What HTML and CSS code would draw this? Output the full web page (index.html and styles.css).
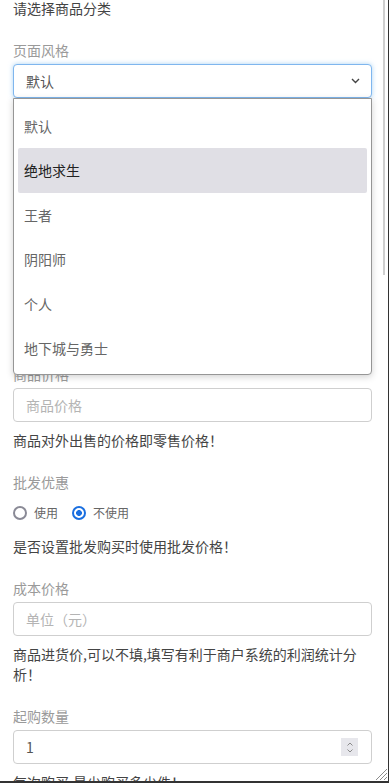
FILE: index.html
```html
<!DOCTYPE html>
<html lang="zh-CN">
<head>
<meta charset="utf-8">
<title>商品设置</title>
<link rel="stylesheet" href="styles.css">
</head>
<body>
<div class="frame">
  <div class="content">
    <p class="help first">请选择商品分类</p>

    <div class="group">
      <label class="label">页面风格</label>
      <div class="select-wrap">
        <div class="select focused">
          <span class="select-value">默认</span>
          <svg class="chevron" width="9" height="6" viewBox="0 0 9 6"><path d="M1 1 L4.5 4.5 L8 1" fill="none" stroke="#444" stroke-width="1.4"/></svg>
        </div>
        <ul class="dropdown">
          <li class="option">默认</li>
          <li class="option active">绝地求生</li>
          <li class="option">王者</li>
          <li class="option">阴阳师</li>
          <li class="option">个人</li>
          <li class="option">地下城与勇士</li>
        </ul>
      </div>
      <p class="help">选择商品展示的页面风格！</p>
    </div>

    <div class="group">
      <label class="label">商品名称</label>
      <div class="input"><span class="placeholder">商品名称</span></div>
      <p class="help">商品在店铺中展示的名称！</p>
    </div>

    <div class="group">
      <label class="label">商品排序</label>
      <div class="input"><span class="placeholder">排序</span></div>
      <p class="help">数字越大越靠前！</p>
    </div>

    <div class="group">
      <label class="label">商品价格</label>
      <div class="input"><span class="placeholder">商品价格</span></div>
      <p class="help">商品对外出售的价格即零售价格！</p>
    </div>

    <div class="group">
      <label class="label">批发优惠</label>
      <div class="radios">
        <span class="radio"><span class="circle"></span><span class="radio-text">使用</span></span>
        <span class="radio"><span class="circle checked"></span><span class="radio-text">不使用</span></span>
      </div>
      <p class="help help-radio">是否设置批发购买时使用批发价格！</p>
    </div>

    <div class="group">
      <label class="label">成本价格</label>
      <div class="input"><span class="placeholder">单位（元）</span></div>
      <p class="help">商品进货价,可以不填,填写有利于商户系统的利润统计分析！</p>
    </div>

    <div class="group">
      <label class="label">起购数量</label>
      <div class="input number">
        <span class="value">1</span>
        <span class="spinner">
          <svg width="8" height="13" viewBox="0 0 8 13"><path d="M1.5 4.5 L4 2 L6.5 4.5" fill="none" stroke="#8a8a8a" stroke-width="1"/><path d="M1.5 8.5 L4 11 L6.5 8.5" fill="none" stroke="#8a8a8a" stroke-width="1"/></svg>
        </span>
      </div>
      <p class="help">每次购买,最少购买多少件！</p>
    </div>
  </div>

  <div class="scroll-thumb"></div>
  <svg class="grip" width="13" height="13" viewBox="0 0 13 13">
    <path d="M12 1 L1 12 M12 5 L5 12 M12 9 L9 12" stroke="#8c8c8c" stroke-width="1"/>
  </svg>
</div>
</body>
</html>
```

FILE: styles.css
```css
html, body {
  margin: 0;
  padding: 0;
  background: #fff;
}

body {
  font-family: "Noto Sans CJK SC", "Noto Sans", sans-serif;
  font-size: 14px;
  color: #444;
}

.frame {
  position: relative;
  width: 389px;
  height: 783px;
  box-sizing: border-box;
  border-right: 1px solid #333;
  border-bottom: 2px solid #333;
  overflow: hidden;
}

.content {
  padding: 0 16px 0 13px;
}

p, ul {
  margin: 0;
  padding: 0;
}

.help {
  margin-top: 8px;
  line-height: 20px;
  color: #444;
}

.help.first {
  margin-top: -2px;
}

.help-radio {
  margin-top: 6px;
}

.group {
  margin-top: 22px;
}

.label {
  display: block;
  line-height: 20px;
  margin-bottom: 4px;
  color: #9a9a9a;
}

.select-wrap {
  position: relative;
}

.select,
.input {
  box-sizing: border-box;
  height: 34px;
  border: 1px solid #cfcfcf;
  border-radius: 4px;
  display: flex;
  align-items: center;
  padding: 0 12px;
  background: #fff;
}

.select.focused {
  border-color: #7fb6ee;
  box-shadow: 0 0 5px rgba(102, 175, 233, 0.55);
}

.select-value {
  flex: 1;
  color: #555;
}

.chevron {
  margin-right: -1px;
}

.placeholder {
  color: #b4b4b4;
}

.value {
  flex: 1;
  color: #555;
}

.spinner {
  width: 17px;
  height: 18px;
  background: #e7e7ec;
  display: flex;
  align-items: center;
  justify-content: center;
  margin-right: 1px;
}

.dropdown {
  position: absolute;
  top: 100%;
  left: 0;
  right: 0;
  box-sizing: border-box;
  height: 277px;
  list-style: none;
  background: #fff;
  border: 1px solid #969696;
  border-radius: 0 0 4px 4px;
  padding: 5px 4px 4px;
  box-shadow: 0 2px 7px rgba(0, 0, 0, 0.18);
  z-index: 5;
}

.option {
  height: 44.4px;
  line-height: 44.4px;
  padding-left: 6px;
  color: #666;
  border-radius: 2px;
}

.option.active {
  background: #e0dfe5;
  color: #222;
}

.radios {
  height: 34px;
  display: flex;
  align-items: center;
  gap: 14px;
  margin-top: 4px;
}

.radio {
  display: flex;
  align-items: center;
  gap: 7px;
}

.circle {
  box-sizing: border-box;
  width: 14px;
  height: 14px;
  border-radius: 50%;
  border: 2px solid #8a8a96;
  background: #fff;
}

.circle.checked {
  border-color: #1a6fe0;
  background: radial-gradient(circle, #1a6fe0 0 2.6px, #fff 3.2px);
}

.radio-text {
  font-size: 12px;
  color: #666;
  line-height: 16px;
}

.scroll-thumb {
  position: absolute;
  top: 0;
  right: 3px;
  width: 2px;
  height: 275px;
  background: #cfcfcf;
}

.grip {
  position: absolute;
  right: 0;
  bottom: 0;
}
```
